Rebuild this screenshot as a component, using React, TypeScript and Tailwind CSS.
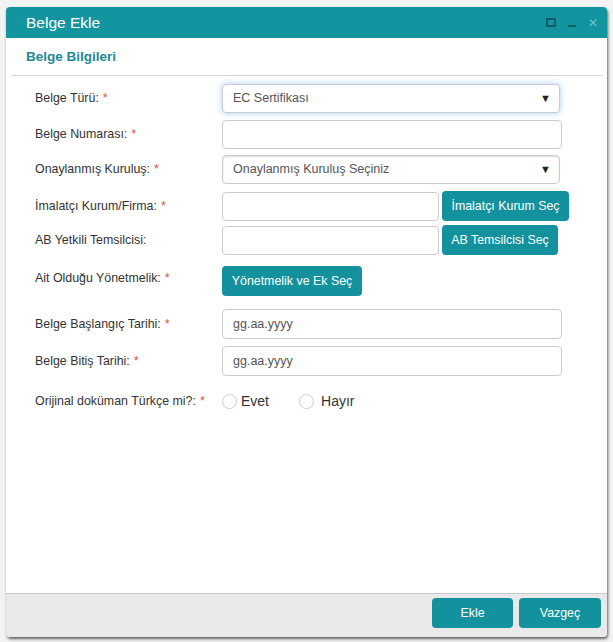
import React, { useState } from 'react';

// Label with optional required marker
const Label: React.FC<{ text: string; required?: boolean }> = ({ text, required }) => (
  <div className="w-[187px] shrink-0 text-[12.4px] text-[#333]">
    {text}
    {required && <span className="ml-1 text-[#d9534f]">*</span>}
  </div>
);

const inputCls =
  'h-[29px] rounded border border-[#ccc] bg-white px-[10px] text-[12.5px] text-[#555] outline-none';

const tealBtn =
  'h-[30px] whitespace-nowrap rounded bg-[#13929d] px-2 text-[12.4px] text-white';

const Arrow = () => (
  <span className="absolute right-[9px] top-[9px] text-[11px] leading-none text-[#222]">▼</span>
);

const App: React.FC = () => {
  const [original, setOriginal] = useState<string | null>(null);

  return (
    <div className="h-[642px] w-[613px] bg-[#f3f3f3] px-[6px] pt-[7px] font-['Liberation_Sans',Arial,sans-serif]">
      <div className="flex h-[630px] w-[601px] flex-col overflow-hidden rounded-sm bg-white shadow-[1px_2px_3px_rgba(0,0,0,0.6)]">
        {/* Title bar */}
        <div className="flex h-[31px] shrink-0 items-center justify-between bg-[#13959f] pl-[20px] pr-[9px]">
          <span className="text-[15.5px] text-white">Belge Ekle</span>
          <div className="flex items-center gap-[12px]">
            <span className="block h-[9px] w-[10px] border-2 border-[#0d5e66]" />
            <span className="mt-[6px] block h-[2px] w-[8px] bg-[#0d5e66]" />
            <span className="text-[12px] leading-none text-[#6cc4cb]">✕</span>
          </div>
        </div>

        {/* Body */}
        <div className="flex-1 px-[5px]">
          <div className="border-b border-[#d6d6d6] px-[15px] pb-[8px] pt-[9px] text-[13.5px] font-bold text-[#1f8893]">
            Belge Bilgileri
          </div>

          <div className="flex flex-col pl-[24px] pt-[8px]">
            <div className="flex items-center">
              <Label text="Belge Türü:" required />
              <div className="relative">
                <div className={`${inputCls} flex w-[338px] items-center border-[#66afe9] text-[#333] shadow-[0_0_6px_rgba(102,175,233,0.6)]`}>
                  EC Sertifikası
                </div>
                <Arrow />
              </div>
            </div>

            <div className="mt-[7px] flex items-center">
              <Label text="Belge Numarası:" required />
              <input className={`${inputCls} w-[340px]`} />
            </div>

            <div className="mt-[6px] flex items-center">
              <Label text="Onaylanmış Kuruluş:" required />
              <div className="relative">
                <div className={`${inputCls} flex w-[338px] items-center text-[#333] shadow-[inset_0_1px_2px_rgba(0,0,0,0.15)]`}>
                  Onaylanmış Kuruluş Seçiniz
                </div>
                <Arrow />
              </div>
            </div>

            <div className="mt-[7px] flex items-center">
              <Label text="İmalatçı Kurum/Firma:" required />
              <input className={`${inputCls} w-[217px]`} />
              <button className={`${tealBtn} ml-[3px] w-[127px]`}>İmalatçı Kurum Seç</button>
            </div>

            <div className="mt-[4px] flex items-center">
              <Label text="AB Yetkili Temsilcisi:" />
              <input className={`${inputCls} w-[217px]`} />
              <button className={`${tealBtn} ml-[3px] w-[116px]`}>AB Temsilcisi Seç</button>
            </div>

            <div className="mt-[11px] flex items-start">
              <div className="pt-[3px]">
                <Label text="Ait Olduğu Yönetmelik:" required />
              </div>
              <button className={`${tealBtn} w-[140px]`}>Yönetmelik ve Ek Seç</button>
            </div>

            <div className="mt-[13px] flex items-center">
              <Label text="Belge Başlangıç Tarihi:" required />
              <input className={`${inputCls} h-[30px] w-[340px] placeholder:text-[#555]`} placeholder="gg.aa.yyyy" />
            </div>

            <div className="mt-[7px] flex items-center">
              <Label text="Belge Bitiş Tarihi:" required />
              <input className={`${inputCls} h-[30px] w-[340px] placeholder:text-[#555]`} placeholder="gg.aa.yyyy" />
            </div>

            <div className="mt-[15px] flex items-center">
              <Label text="Orijinal doküman Türkçe mi?:" required />
              <label className="flex items-center" onClick={() => setOriginal('evet')}>
                <span className={`block h-[15px] w-[15px] rounded-full border border-[#ccc] ${original === 'evet' ? 'bg-[#13959f]' : 'bg-white'}`} />
                <span className="ml-[4px] text-[14px] text-[#333]">Evet</span>
              </label>
              <label className="ml-[30px] flex items-center" onClick={() => setOriginal('hayir')}>
                <span className={`block h-[15px] w-[15px] rounded-full border border-[#ccc] ${original === 'hayir' ? 'bg-[#13959f]' : 'bg-white'}`} />
                <span className="ml-[7px] text-[14px] text-[#333]">Hayır</span>
              </label>
            </div>
          </div>
        </div>

        {/* Footer */}
        <div className="flex h-[44px] shrink-0 items-start justify-end gap-[6px] border-t border-[#c9c9c9] bg-[#e9e9e9] pr-[6px] pt-[4px]">
          <button className={`${tealBtn} w-[81px]`}>Ekle</button>
          <button className={`${tealBtn} w-[82px]`}>Vazgeç</button>
        </div>
      </div>
    </div>
  );
};

export default App;
